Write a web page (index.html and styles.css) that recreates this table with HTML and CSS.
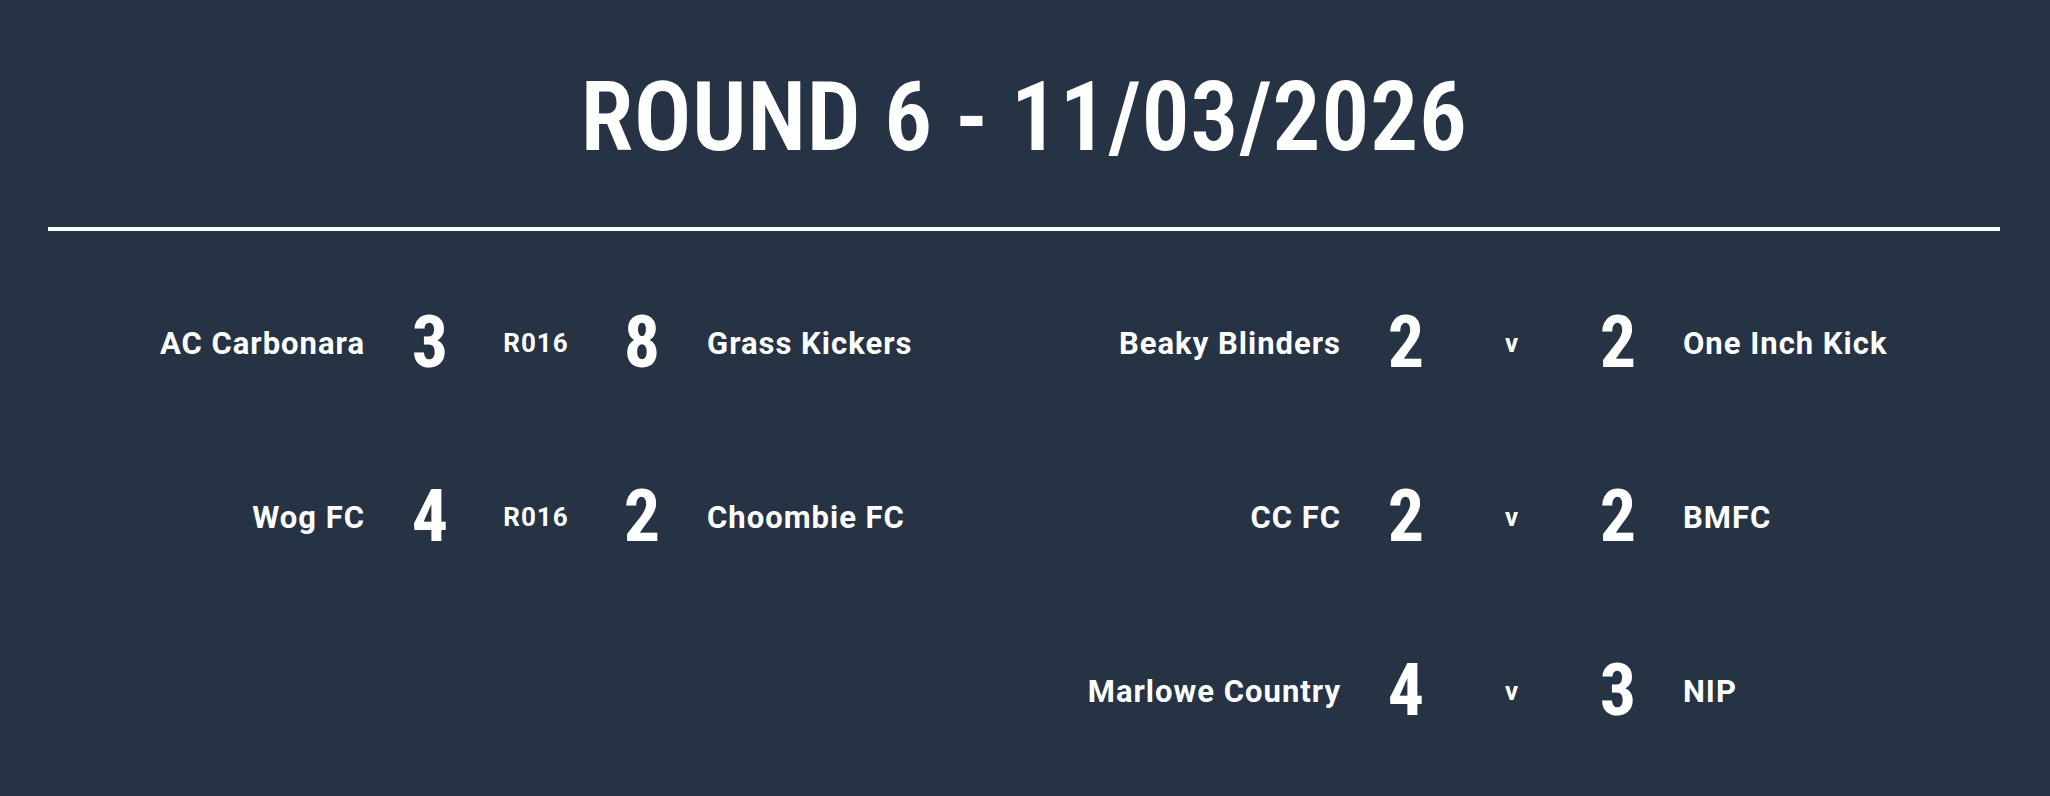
FILE: index.html
```html
<!DOCTYPE html>
<html lang="en">
<head>
<meta charset="utf-8">
<title>Round 6 Results</title>
<link rel="stylesheet" href="styles.css">
</head>
<body>
<main class="page">
  <h1 class="title">ROUND 6 - 11/03/2026</h1>
  <hr class="rule">
  <section class="columns">
    <div class="column">
      <div class="match">
        <span class="team home">AC Carbonara</span>
        <span class="score">3</span>
        <span class="mid">R016</span>
        <span class="score">8</span>
        <span class="team away">Grass Kickers</span>
      </div>
      <div class="match">
        <span class="team home">Wog FC</span>
        <span class="score">4</span>
        <span class="mid">R016</span>
        <span class="score">2</span>
        <span class="team away">Choombie FC</span>
      </div>
    </div>
    <div class="column">
      <div class="match">
        <span class="team home">Beaky Blinders</span>
        <span class="score">2</span>
        <span class="mid">v</span>
        <span class="score">2</span>
        <span class="team away">One Inch Kick</span>
      </div>
      <div class="match">
        <span class="team home">CC FC</span>
        <span class="score">2</span>
        <span class="mid">v</span>
        <span class="score">2</span>
        <span class="team away">BMFC</span>
      </div>
      <div class="match">
        <span class="team home">Marlowe Country</span>
        <span class="score">4</span>
        <span class="mid">v</span>
        <span class="score">3</span>
        <span class="team away">NIP</span>
      </div>
    </div>
  </section>
</main>
</body>
</html>
```

FILE: styles.css
```css
html, body {
  margin: 0;
  padding: 0;
  background: #263345;
}

body {
  color: #ffffff;
  font-family: Roboto, "Liberation Sans", sans-serif;
}

.page {
  padding: 0 50px 0 48px;
  height: 796px;
  box-sizing: border-box;
  overflow: hidden;
}

.title {
  margin: 69px 0 0;
  font-family: Roboto, "Liberation Sans", sans-serif;
  font-stretch: 80%;
  font-weight: 600;
  font-size: 96px;
  line-height: 1;
  letter-spacing: 0.5px;
  text-align: center;
}

.rule {
  margin: 62px 0 0;
  border: 0;
  height: 4px;
  background: #ffffff;
}

.columns {
  display: grid;
  grid-template-columns: 1fr 1fr;
  padding-top: 25px;
}

.column {
  display: flex;
  flex-direction: column;
}

.match {
  height: 174px;
  display: grid;
  grid-template-columns: 1fr 130px 82px 130px 1fr;
  align-items: center;
}

.team {
  font-weight: 700;
  font-size: 31px;
  line-height: 1;
  letter-spacing: 1px;
  white-space: nowrap;
}

.home {
  text-align: right;
}

.away {
  text-align: left;
}

.score {
  font-stretch: 80%;
  font-weight: 700;
  font-size: 72px;
  line-height: 1;
  text-align: center;
}

.mid {
  font-weight: 700;
  font-size: 26px;
  line-height: 1;
  letter-spacing: 1px;
  text-align: center;
}
```
